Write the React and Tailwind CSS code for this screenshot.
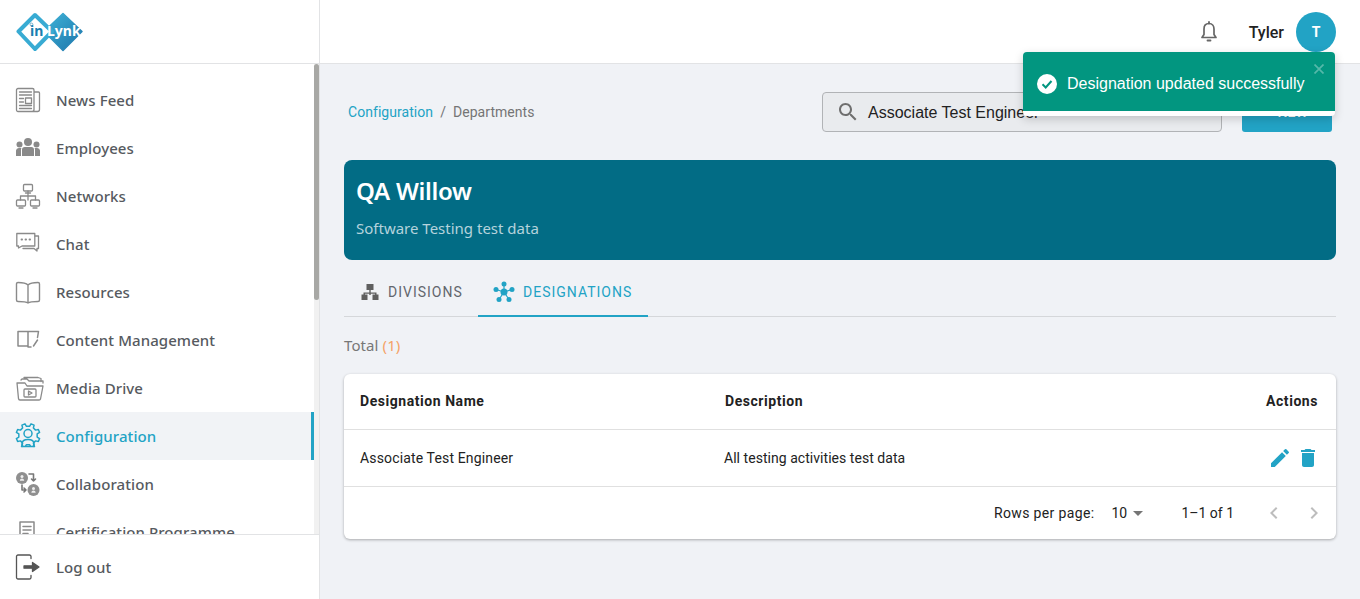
import React from "react";

const S = { fill: "none", stroke: "#8a8a8a", strokeWidth: 1.3, strokeLinejoin: "round", strokeLinecap: "round" };

const gearPath = (cx, cy, ro, ri, n) => {
  const pts = [];
  for (let i = 0; i < n; i++) {
    const a = (i / n) * Math.PI * 2 + Math.PI / n;
    const w = (Math.PI / n) * 0.5;
    const p = (r, t) => `${(cx + r * Math.cos(t)).toFixed(2)} ${(cy + r * Math.sin(t)).toFixed(2)}`;
    pts.push(p(ri, a - w * 1.15), p(ro, a - w * 0.7), p(ro, a + w * 0.7), p(ri, a + w * 1.15));
  }
  return "M" + pts.join("L") + "Z";
};

const NewsIcon = () => (
  <svg width="26" height="26" viewBox="0 0 26 26" {...S} className="ml-[-1px]">
    <path d="M19 3V22.500a2 2 0 0 1-2 2H3a1.500 1.500 0 0 1-1.500-1.500V3A1.500 1.500 0 0 1 3 1.500h14.500A1.500 1.500 0 0 1 19 3zM19 5h4.500a1 1 0 0 1 1 1v16.500a2 2 0 0 1-2 2H17" />
    <path d="M4.500 5h12M4.500 8h12M4.500 11.500h4M4.500 15h4M4.500 18.500h12M4.500 21.500h12" />
    <rect x="10.500" y="11" width="6" height="5.500" />
  </svg>
);
const PeopleIcon = () => (
  <svg width="26" height="26" viewBox="0 0 26 26" fill="#8a8a8a" className="ml-[-1px]">
    <circle cx="13" cy="7" r="4" />
    <circle cx="4.500" cy="9.500" r="3" />
    <circle cx="21.500" cy="9.500" r="3" />
    <path d="M1 21v-5.500A2.800 2.800 0 0 1 3.800 13h2.700a3 3 0 0 0-.5 1.800V21zM25 21v-5.500A2.800 2.800 0 0 0 22.200 13h-2.700a3 3 0 0 1 .5 1.800V21zM7 21v-6.200A2.800 2.800 0 0 1 9.800 12h6.400A2.800 2.800 0 0 1 19 14.800V21z" />
  </svg>
);
const NetIcon = () => (
  <svg width="26" height="26" viewBox="0 0 26 26" {...S} className="ml-[-1px]">
    <rect x="8.500" y="1.500" width="9" height="6.500" rx="1" />
    <path d="M13 8v5M5.500 17v-4h15v4M13 13v4M10.500 10h5" />
    <rect x="1.500" y="17" width="9" height="6" rx="1" />
    <rect x="15.500" y="17" width="9" height="6" rx="1" />
    <path d="M4 25h4M18 25h4" />
  </svg>
);
const ChatIcon = () => (
  <svg width="26" height="26" viewBox="0 0 26 26" {...S} className="ml-[-1px]">
    <path d="M1.800 2.500h18v12.500H7l-3.500 2v-2H1.800z" />
    <path d="M20 5h3.500v12.500H22v2.500l-3-2.500H8" />
    <path d="M6.500 8.500h.6M10.500 8.500h.6M14.500 8.500h.6" strokeWidth="1.800" />
  </svg>
);
const BookIcon = () => (
  <svg width="26" height="26" viewBox="0 0 26 26" {...S} className="ml-[-1px]">
    <path d="M13 6c-2-2-6-2.500-10-2.500-.8 0-1.500.5-1.500 1.500v16c0 1 .7 1.500 1.500 1.500 4 0 8 0 10 1.500 2-1.500 6-1.500 10-1.500.8 0 1.500-.5 1.500-1.500V5c0-1-.7-1.500-1.500-1.500C19 3.500 15 4 13 6zM13 6v17" strokeWidth="1.400" />
  </svg>
);
const ContentIcon = () => (
  <svg width="26" height="26" viewBox="0 0 26 26" {...S} className="ml-[-1px]">
    <path d="M13 4.500H3v14.500h10zM13 4.500h10.500l-1 6M13 19v1h3M22.500 13l-4 6" strokeWidth="1.500" />
  </svg>
);
const MediaIcon = () => (
  <svg width="28" height="26" viewBox="0 0 28 26" {...S}>
    <path d="M8 2.500h14l3 1v3M5 5l1-1h5l2 2h14v2" />
    <path d="M1 8h8l2 3h16l-2.500 13a1.500 1.500 0 0 1-1.500 1H4a1.500 1.500 0 0 1-1.500-1.300z" />
    <rect x="8" y="14" width="12" height="8" rx="1" />
    <path d="M12.500 16v4l3.500-2z" />
  </svg>
);
const ConfigIcon = () => (
  <svg width="26" height="26" viewBox="0 0 26 26" fill="none" stroke="#22a3c5" strokeWidth="1.500" strokeLinejoin="round" strokeLinecap="round" className="ml-[-1px]">
    <defs>
      <clipPath id="gearclip"><rect x="0" y="0" width="26" height="23.500" /></clipPath>
    </defs>
    <path d={gearPath(13, 12.500, 12, 9.300, 8)} clipPath="url(#gearclip)" />
    <path d="M6.500 23.500h13" />
    <circle cx="13" cy="10.500" r="4" />
    <path d="M7 23.500v-2.500c0-3 2.500-4.500 6-4.500s6 1.500 6 4.500v2.500" />
  </svg>
);
const CollabIcon = () => (
  <svg width="26" height="26" viewBox="0 0 26 26" fill="none" stroke="#777" strokeWidth="1.600" strokeLinecap="round" strokeLinejoin="round" className="ml-[-1px]">
    <circle cx="7" cy="7" r="6" fill="#8f8f8f" stroke="none" />
    <circle cx="18.500" cy="19" r="6" fill="#8f8f8f" stroke="none" />
    <circle cx="7" cy="5.500" r="1.500" fill="#eee" stroke="none" />
    <path d="M4.800 9.800c.3-1.500 1-2.200 2.200-2.200s1.900.7 2.200 2.200z" fill="#eee" stroke="none" />
    <circle cx="18.500" cy="17.500" r="1.500" fill="#eee" stroke="none" />
    <path d="M16.300 21.800c.3-1.500 1-2.200 2.200-2.200s1.900.7 2.200 2.200z" fill="#eee" stroke="none" />
    <path d="M7 14v5h4M9 17l2 2-2 2M14 3h4.500v7M16.500 8l2 2 2-2" />
  </svg>
);
const CertIcon = () => (
  <svg width="26" height="26" viewBox="0 0 26 26" {...S}>
    <path d="M18 15V3H4v20h10" strokeWidth="1.500" />
    <path d="M7 7.500h8M7 11h8M7 14.500h5" strokeWidth="1.500" />
    <circle cx="18.500" cy="20" r="4" />
  </svg>
);
const LogoutIcon = () => (
  <svg width="26" height="26" viewBox="0 0 26 26" fill="none" stroke="#555" strokeWidth="1.300" strokeLinecap="round" strokeLinejoin="round" className="ml-[-1px]">
    <path d="M16 4.500V2.500A1.500 1.500 0 0 0 14.500 1H3a1.500 1.500 0 0 0-1.500 1.500v21A1.500 1.500 0 0 0 3 25h11.500a1.500 1.500 0 0 0 1.500-1.500v-2" />
    <path d="M9 11.800h8.500V8.500l6.500 4.500-6.500 4.500v-3.300H9z" fill="#555" stroke="#555" />
  </svg>
);

const items = [
  ["News Feed", NewsIcon],
  ["Employees", PeopleIcon],
  ["Networks", NetIcon],
  ["Chat", ChatIcon],
  ["Resources", BookIcon],
  ["Content Management", ContentIcon],
  ["Media Drive", MediaIcon],
  ["Configuration", ConfigIcon, true],
  ["Collaboration", CollabIcon],
  ["Certification Programme", CertIcon],
];

const Logo = () => (
  <div className="relative w-[68px] h-[40px]">
    <svg width="68" height="40" viewBox="0 0 68 40" className="absolute left-0 top-0">
      <defs>
        <linearGradient id="lg1" x1="0" y1="0" x2="1" y2="1">
          <stop offset="0" stopColor="#3fb4d8" />
          <stop offset="1" stopColor="#1c74aa" />
        </linearGradient>
      </defs>
      <path d="M47 1.500 66 19.500 47 38.500 28 19.500z" fill="url(#lg1)" stroke="url(#lg1)" strokeWidth="1.500" strokeLinejoin="round" />
      <path d="M19 3 36 19.500 19 37 2.500 19.500z" fill="#fff" stroke="#38abd3" strokeWidth="4" strokeLinejoin="round" />
      <circle cx="15.500" cy="12.500" r="1.400" fill="none" stroke="#5a9fc0" strokeWidth="0.800" />
    </svg>
    <span className="absolute left-[14px] top-[9px] text-[14px] leading-[20px] font-bold text-[#1a7fb0] font-['Noto_Sans',sans-serif]">in</span>
    <span className="absolute left-[31px] top-[9px] text-[14px] leading-[20px] font-bold text-white font-['Noto_Sans',sans-serif]">Lynk</span>
  </div>
);

const Sidebar = () => (
  <aside className="w-[320px] shrink-0 h-full flex flex-col bg-white border-r border-[#e2e3e5] font-['Noto_Sans',sans-serif]">
    <div className="h-[64px] shrink-0 border-b border-[#e2e3e5] flex items-center pl-[16px]">
      <Logo />
    </div>
    <div className="relative flex-1 min-h-0 overflow-hidden pt-[12px] pr-[5px]">
      {items.map(([label, Icon, active]) => (
        <div
          key={label}
          className={`h-[48px] flex items-center pl-[16px] ${active ? "bg-[#f1f3f6] border-r-[3px] border-[#22a3c5]" : ""}`}
        >
          <span className="w-[40px] shrink-0 flex items-center"><Icon /></span>
          <span className={`text-[15px] font-medium tracking-[0.08px] ${active ? "text-[#22a3c5]" : "text-[#565a60]"}`}>{label}</span>
        </div>
      ))}
      <div className="absolute right-0 top-0 bottom-0 w-[5px] bg-[#f1f1f1]">
        <div className="h-[236px] w-[5px] rounded-[3px] bg-[#a8a8a5]" />
      </div>
    </div>
    <div className="h-[65px] shrink-0 border-t border-[#e2e3e5] flex items-center pl-[16px]">
      <span className="w-[40px] shrink-0 flex items-center"><LogoutIcon /></span>
      <span className="text-[15px] font-medium tracking-[0.08px] text-[#565a60]">Log out</span>
    </div>
  </aside>
);

const Toast = () => (
  <div className="absolute left-[1023px] top-[52px] w-[312px] h-[64px] rounded-[4px] overflow-hidden bg-white shadow-[0_3px_10px_rgba(0,0,0,0.18)] font-['Liberation_Sans',sans-serif]">
    <div className="relative h-[59px] bg-[#029680] flex items-center pl-[14px] pt-[5px] text-white">
      <svg width="20" height="20" viewBox="0 0 20 20" className="shrink-0">
        <circle cx="10" cy="10" r="10" fill="#fff" />
        <path d="M5.500 10.300 8.700 13.500 14.500 7" fill="none" stroke="#029680" strokeWidth="2" />
      </svg>
      <span className="ml-[10px] text-[16px] whitespace-nowrap">Designation updated successfully</span>
      <svg width="10" height="10" viewBox="0 0 10 10" className="absolute right-[11px] top-[12px]">
        <path d="M.5.500 9.500 9.500M9.500.500.500 9.500" stroke="#55b8a9" strokeWidth="1.700" />
      </svg>
    </div>
  </div>
);

const Main = () => (
  <main className="flex-1 min-w-0 h-full flex flex-col bg-[#f0f2f6]">
    <header className="h-[64px] shrink-0 bg-white flex items-center justify-end pr-[24px]">
      <svg width="24" height="24" viewBox="0 0 24 24" fill="none" stroke="#666" strokeWidth="1.700">
        <path d="M12 3.500c-3.500 0-5 2.700-5 5.500v5.500L5 17.500h14l-2-3V9c0-2.800-1.500-5.500-5-5.500z" strokeLinejoin="round" />
        <path d="M12 2v1.500M10.500 20.500h3" strokeLinecap="round" strokeWidth="1.800" />
      </svg>
      <span className="ml-[28px] text-[16px] font-medium text-[#222] font-['Roboto',sans-serif] pt-[1px]">Tyler</span>
      <div className="ml-[12px] w-[40px] h-[40px] rounded-full bg-[#22a3c5] text-white flex items-center justify-center text-[14px] font-bold font-['Roboto',sans-serif]">T</div>
    </header>
    <div className="flex-1 px-[24px] pt-[28px] font-['Roboto',sans-serif] border-t border-[#e2e3e5] mt-[-1px]">
      <div className="flex items-center h-[40px]">
        <div className="flex-1 text-[14px] tracking-[0.05px] pl-[4px] text-[#757575]">
          <span className="text-[#22a3c5]">Configuration</span>
          <span className="mx-[7px]">/</span>
          <span>Departments</span>
        </div>
        <div className="w-[400px] h-[40px] border border-[#b1b3b6] rounded-[4px] bg-[#e9ebee] flex items-center pl-[13px]">
          <svg width="24" height="24" viewBox="0 0 24 24" fill="#6f6f6f"><path d="M15.500 14h-.79l-.28-.27C15.410 12.590 16 11.110 16 9.500 16 5.910 13.090 3 9.500 3S3 5.910 3 9.500 5.910 16 9.500 16c1.610 0 3.090-.59 4.230-1.570l.27.28v.79l5 4.990L20.490 19l-4.990-5zm-6 0C7.010 14 5 11.990 5 9.500S7.010 5 9.500 5 14 7.010 14 9.500 11.990 14 9.500 14z" /></svg>
          <span className="ml-[8px] pt-[1px] text-[16px] text-[#222] whitespace-nowrap font-['Liberation_Sans',sans-serif]">Associate Test Engineer</span>
        </div>
        <div className="ml-[20px] mr-[4px] w-[90px] h-[40px] rounded-[3px] bg-[#22a3c5] text-white text-[14px] font-medium flex items-center justify-center">+ NEW</div>
      </div>

      <section className="mt-[28px] h-[100px] rounded-[8px] bg-[#026c85] px-[12px] pt-[15px] font-['Noto_Sans',sans-serif]">
        <h1 className="text-[24px] leading-[32px] font-semibold tracking-[-0.3px] text-white">QA Willow</h1>
        <p className="mt-[9px] text-[15px] leading-[24px] text-[#b5d3dc]">Software Testing test data</p>
      </section>

      <div className="mt-[8px] h-[49px] border-b border-[#d5d7da] flex text-[14px] tracking-[1px]">
        <div className="w-[134px] h-[48px] flex items-center pl-[16px] text-[#62666d]">
          <svg width="20" height="20" viewBox="0 0 20 20" fill="#5f5f5f" className="mr-[8px]">
            <rect x="6.500" y="2" width="7" height="6" />
            <path d="M9.300 8h1.400v2.500h5.800V13h-1.400v-1.200H10.700V13H9.300v-1.200H4.900V13H3.500v-2.500h5.800z" />
            <rect x="1.500" y="12.500" width="6" height="5.500" />
            <rect x="12.500" y="12.500" width="6" height="5.500" />
          </svg>
          DIVISIONS
        </div>
        <div className="w-[170px] h-[49px] flex items-center pl-[15px] pt-[1px] text-[#22a3c5] border-b-2 border-[#22a3c5]">
          <svg width="22" height="22" viewBox="0 0 22 22" fill="#22a3c5" className="mr-[8px]">
            <circle cx="11" cy="11" r="3.500" />
            <circle cx="11" cy="3" r="2.500" />
            <circle cx="3" cy="8.500" r="2.500" />
            <circle cx="19" cy="8.500" r="2.500" />
            <circle cx="6" cy="18.500" r="2.500" />
            <circle cx="16" cy="18.500" r="2.500" />
            <path d="M11 3v8M3 8.500l8 2.500M19 8.500l-8 2.500M6 18.500l5-7.500M16 18.500l-5-7.500" stroke="#22a3c5" strokeWidth="1.200" />
          </svg>
          DESIGNATIONS
        </div>
      </div>

      <div className="mt-[17px] text-[15px] leading-[22px] tracking-[0.1px] text-[#777] font-['Noto_Sans',sans-serif]">
        Total <span className="text-[#f5a267]">(1)</span>
      </div>

      <div className="mt-[18px] rounded-[6px] bg-white shadow-[0_1px_3px_rgba(0,0,0,0.3)] text-[14px] text-[#222]">
        <div className="h-[56px] flex items-center pl-[16px] pr-[18px] border-b border-[#e0e0e0] font-bold tracking-[0.55px]">
          <span className="w-[365px]">Designation Name</span>
          <span className="flex-1">Description</span>
          <span>Actions</span>
        </div>
        <div className="h-[57px] flex items-center px-[16px] border-b border-[#e0e0e0]">
          <span className="w-[364px] tracking-[0.15px]">Associate Test Engineer</span>
          <span className="flex-1 tracking-[0.04px]">All testing activities test data</span>
          <svg width="24" height="24" viewBox="0 0 24 24" fill="#22a3c5"><path d="M3 17.250V21h3.750L17.810 9.940l-3.750-3.750L3 17.250zM20.710 7.040a.996.996 0 0 0 0-1.410l-2.340-2.340a.996.996 0 0 0-1.410 0l-1.830 1.830 3.750 3.750 1.830-1.830z" /></svg>
          <svg width="24" height="24" viewBox="0 0 24 24" fill="#22a3c5" className="ml-[4px]"><path d="M6 19c0 1.100.9 2 2 2h8c1.100 0 2-.9 2-2V7H6v12zM19 4h-3.500l-1-1h-5l-1 1H5v2h14V4z" /></svg>
        </div>
        <div className="h-[52px] flex items-center justify-end text-[14px] pr-[10px]">
          <span className="tracking-[0.35px]">Rows per page:</span>
          <span className="ml-[17px] w-[20px]">10</span>
          <svg width="24" height="24" viewBox="0 0 24 24" fill="#757575" className="ml-[-5px]"><path d="M7 10l5 5 5-5z" /></svg>
          <span className="ml-[31px]">1–1 of 1</span>
          <svg width="24" height="24" viewBox="0 0 24 24" fill="#bdbdbd" className="ml-[28px]"><path d="M15.410 7.410 14 6l-6 6 6 6 1.410-1.410L10.830 12z" /></svg>
          <svg width="24" height="24" viewBox="0 0 24 24" fill="#bdbdbd" className="ml-[16px]"><path d="M10 6 8.590 7.410 13.170 12l-4.580 4.590L10 18l6-6z" /></svg>
        </div>
      </div>
    </div>
  </main>
);

export default function App() {
  return (
    <div className="relative w-[1360px] h-[599px] flex overflow-hidden">
      <Sidebar />
      <Main />
      <Toast />
    </div>
  );
}
